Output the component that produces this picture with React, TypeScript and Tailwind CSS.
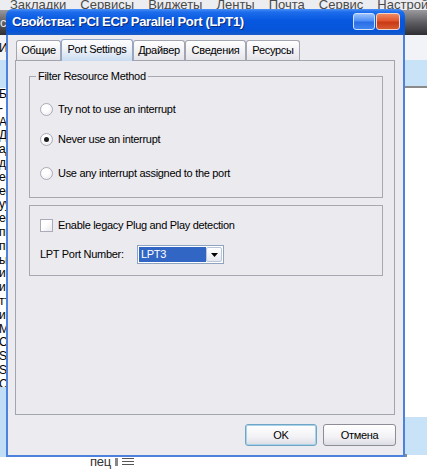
import React from "react";

const leftLetters = [
  "Бе", "-", "Ад", "Да", "ад", "де", "ее", "ее", "уу", "ее", "пп", "пп", "ьь", "ии", "ии", "тт", "ии", "Мм", "Сс", "Ss", "Ss", "Сс", "ее", "оо", "ll",
];

function Radio({ checked }: { checked?: boolean }) {
  return (
    <span className="flex h-[13px] w-[13px] shrink-0 items-center justify-center rounded-full border border-[#a9acb8] bg-[radial-gradient(circle_at_40%_35%,#ffffff_30%,#e6e6ec_100%)]">
      {checked ? <span className="h-[5px] w-[5px] rounded-full bg-[#1b1b1b]" /> : null}
    </span>
  );
}

function Tab({ label, w, selected }: { label: string; w: string; selected?: boolean }) {
  if (selected) {
    return (
      <div
        className={`${w} relative z-10 -mb-[1px] flex h-[22px] items-start justify-center rounded-t-[3px] border border-b-0 border-[#8ea6c9] bg-[linear-gradient(180deg,#fdfdfe_0%,#eef2f8_45%,#c9dcf2_100%)] pt-[1px]`}
      >
        {label}
      </div>
    );
  }
  return (
    <div
      className={`${w} mt-[1px] flex h-[20px] items-center justify-center rounded-t-[3px] border border-b-0 border-[#a3a6b0] bg-[linear-gradient(180deg,#ffffff_0%,#f0f0f4_60%,#e4e4ea_100%)]`}
    >
      {label}
    </div>
  );
}

export default function App() {
  return (
    <div className="relative h-[474px] w-[427px] overflow-hidden bg-white font-['Liberation_Sans',Arial,sans-serif] text-[11px] tracking-[-0.3px] text-black">
      {/* background: browser chrome / page behind the dialog */}
      <div className="flex h-[10px] items-end gap-[14px] overflow-hidden bg-[#ecedf0] pl-[10px] text-[13px] leading-[13px] tracking-normal text-[#4a4a4a]">
        <span className="-mb-[1px]">Закладки</span>
        <span className="-mb-[1px]">Сервисы</span>
        <span className="-mb-[1px]">Виджеты</span>
        <span className="-mb-[1px]">Ленты</span>
        <span className="-mb-[1px]">Почта</span>
        <span className="-mb-[1px]">Сервис</span>
        <span className="-mb-[1px]">Настройки</span>
        <span className="-mb-[1px]">У</span>
      </div>
      <div className="h-[25px] bg-[linear-gradient(180deg,#9a9a9e_0%,#5e5e62_50%,#2f2f33_100%)] pl-[0px] text-[13px] leading-[25px] text-[#e8e8e8]">
        с
      </div>
      <div className="flex h-[25px] items-center justify-between bg-[#f2f3f6] text-[12px]">
        <span className="-ml-[1px]">И</span>
        <span />
      </div>
      <div className="flex h-[28px] justify-between">
        <div className="w-[8px] bg-[#c6e1f7]" />
        <div className="w-[24px] border-b-2 border-[#8a8a8a] bg-[#c8e2f8]" />
      </div>
      <div className="flex flex-col pt-[0px] text-[12px] leading-[13.8px]">
        {leftLetters.map((l, i) => (
          <span key={i} className="-ml-[1px]">
            {l}
          </span>
        ))}
      </div>
      <div className="absolute bottom-[17px] left-0 h-[70px] w-[8px] bg-[#c2def6]" />
      <div className="absolute bottom-[19px] right-0 h-[38px] w-[25px] bg-[#c8e2f8]" />
      <div className="absolute bottom-[17px] right-[20px] h-[3px] w-[6px] bg-[#8a8a8a]" />
      <div className="absolute bottom-[6px] left-[90px] flex items-center gap-[4px] text-[13px] leading-[13px] text-[#333]">
        <span>пец</span>
        <span className="h-[8px] w-[3px] bg-[#888]" />
        <span className="flex w-[12px] flex-col gap-[2px]">
          <span className="h-[1px] bg-[#555]" />
          <span className="h-[1px] bg-[#555]" />
          <span className="h-[1px] bg-[#555]" />
        </span>
      </div>

      {/* dialog window */}
      <div className="absolute left-[6px] top-[9px] flex h-[448px] w-[399px] flex-col overflow-hidden rounded-t-[7px] bg-[#4c82de]">
        {/* title bar */}
        <div className="flex h-[26px] shrink-0 items-center justify-between bg-[linear-gradient(180deg,#4c90f6_0%,#1d6cec_12%,#0758e0_45%,#0654d8_85%,#1a5cc8_100%)] pl-[6px] pr-[5px]">
          <span className="font-['Liberation_Sans',Arial,sans-serif] text-[13px] font-bold tracking-[-0.35px] text-white [text-shadow:1px_1px_0_#0b2a7a]">
            Свойства: PCI ECP Parallel Port (LPT1)
          </span>
          <div className="flex gap-[1px] pb-[2px]">
            <div className="h-[17px] w-[22px] rounded-[3px] border border-[#cfe0fb] bg-[linear-gradient(180deg,#9cc2fb_0%,#4f8ff5_45%,#2a6ee6_55%,#3f86f0_100%)]" />
            <div className="h-[17px] w-[24px] rounded-[3px] border border-[#f5d4c8] bg-[linear-gradient(180deg,#f08a62_0%,#e2562d_45%,#c83a16_55%,#d75a30_100%)]" />
          </div>
        </div>

        {/* client area */}
        <div className="mx-[2px] mb-[2px] flex flex-1 flex-col bg-[#ecebf0] px-[7px] pt-[4px]">
          {/* tabs */}
          <div className="flex h-[21px] items-start pl-[1px]">
            <Tab label="Общие" w="w-[45px]" />
            <Tab label="Port Settings" w="w-[72px]" selected />
            <Tab label="Драйвер" w="w-[52px]" />
            <Tab label="Сведения" w="w-[61px]" />
            <Tab label="Ресурсы" w="w-[54px]" />
          </div>

          {/* tab panel */}
          <div className="flex h-[355px] w-[380px] flex-col border border-[#a3a5ae] bg-[#ebeaef] pl-[13px] pt-[15px]">
            {/* Group box 1 */}
            <div className="relative flex h-[122px] w-[354px] flex-col border border-[#a7a8b0] pl-[10px] pt-[25px]">
              <span className="absolute -top-[8px] left-[6px] bg-[#ebeaef] px-[2px] leading-[14px]">
                Filter Resource Method
              </span>
              <div className="flex h-[14px] items-center gap-[5px]">
                <Radio />
                <span>Try not to use an interrupt</span>
              </div>
              <div className="mt-[16px] flex h-[14px] items-center gap-[5px]">
                <Radio checked />
                <span>Never use an interrupt</span>
              </div>
              <div className="mt-[20px] flex h-[14px] items-center gap-[5px]">
                <Radio />
                <span>Use any interrupt assigned to the port</span>
              </div>
            </div>

            {/* Group box 2 */}
            <div className="mt-[7px] flex h-[71px] w-[354px] flex-col border border-[#a7a8b0] pl-[10px] pt-[12px]">
              <div className="flex h-[14px] items-center gap-[5px]">
                <span className="h-[13px] w-[13px] shrink-0 border border-[#a9acb8] bg-[linear-gradient(135deg,#ffffff_40%,#e8e8ee_100%)]" />
                <span>Enable legacy Plug and Play detection</span>
              </div>
              <div className="mt-[13px] flex h-[19px] items-center">
                <span className="w-[97px]">LPT Port Number:</span>
                <div className="flex h-[19px] w-[87px] items-stretch border border-[#8ea3bf] bg-white p-[1px]">
                  <div className="flex flex-1 items-center bg-[#3266c4] pl-[2px] text-white">LPT3</div>
                  <div className="flex w-[16px] items-center justify-center rounded-[2px] border border-[#b9c4d6] bg-[linear-gradient(180deg,#ffffff_0%,#e6e8ef_100%)]">
                    <svg width="7" height="4" viewBox="0 0 7 4">
                      <path d="M0 0H7L3.5 4Z" fill="#000" />
                    </svg>
                  </div>
                </div>
              </div>
            </div>
          </div>

          {/* buttons */}
          <div className="mt-[9px] flex justify-end gap-[6px] pr-[0px]">
            <button className="flex h-[22px] w-[72px] items-center justify-center rounded-[3px] border border-[#6fa6c6] bg-[linear-gradient(180deg,#ffffff_0%,#f2f2f6_60%,#dcdce4_100%)] shadow-[inset_0_0_0_1px_#a9d1ea]">
              OK
            </button>
            <button className="flex h-[22px] w-[73px] items-center justify-center rounded-[3px] border border-[#8c8d96] bg-[linear-gradient(180deg,#ffffff_0%,#f2f2f6_60%,#dcdce4_100%)]">
              Отмена
            </button>
          </div>
        </div>
      </div>
    </div>
  );
}
